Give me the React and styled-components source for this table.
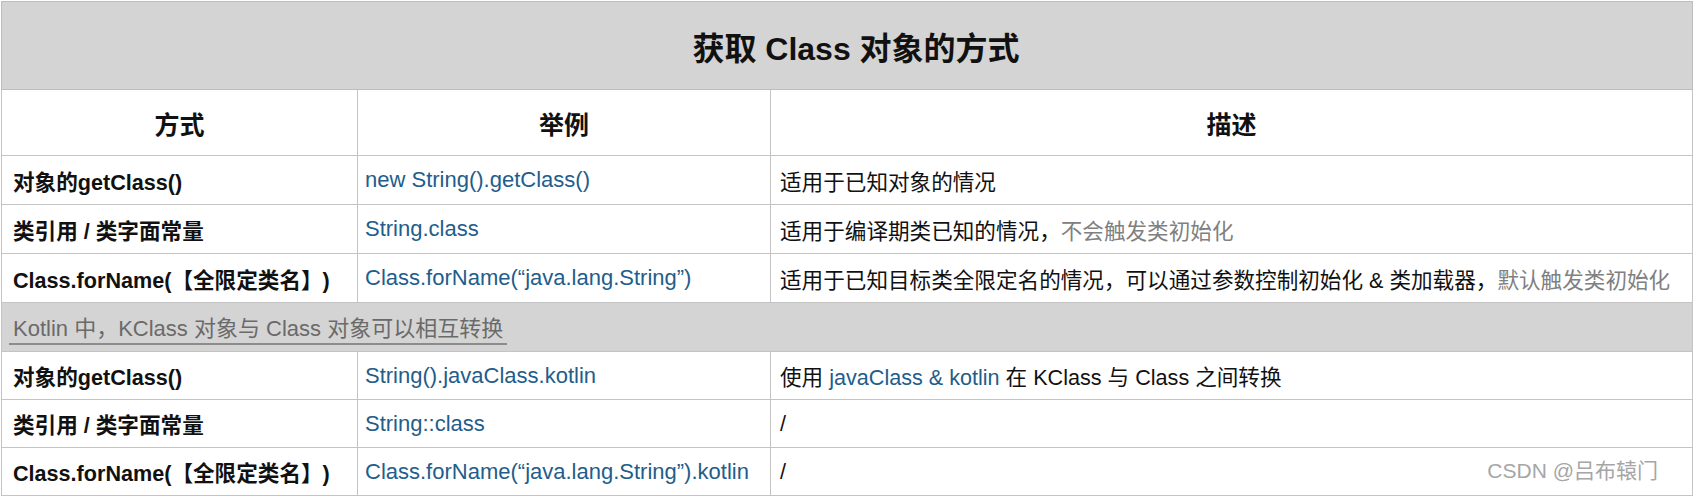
import styled, { createGlobalStyle } from 'styled-components';

const GlobalStyle = createGlobalStyle`
  html, body {
    margin: 0;
    background: #ffffff;
  }
  body {
    font-family: "Liberation Sans", "Noto Sans CJK SC", sans-serif;
    text-spacing-trim: space-all;
  }
`;

const Page = styled.div`
  position: relative;
  width: 1698px;
  height: 500px;
  padding: 1px 0 0 1px;
  box-sizing: border-box;
  overflow: hidden;
`;

const Table = styled.table`
  width: 1692px;
  border-collapse: collapse;
  table-layout: fixed;
  color: #111111;
`;

const TitleCell = styled.th`
  height: 87px;
  padding: 0 0 0 18px;
  background: #d4d4d4;
  border: 1px solid #bdbdbd;
  font-size: 32px;
  font-weight: 700;
  text-align: center;
  vertical-align: middle;
`;

const HeadCell = styled.th`
  height: 65px;
  padding: 0;
  border: 1px solid #c4c4c4;
  font-size: 25px;
  font-weight: 700;
  text-align: center;
  vertical-align: middle;
`;

const Row = styled.tr`
  height: ${(p) => p.$h}px;
`;

const Cell = styled.td`
  padding: 0 8px 0 ${(p) => p.$pad}px;
  border: 1px solid #c4c4c4;
  font-size: ${(p) => (p.$code ? 22 : 21.6)}px;
  font-weight: ${(p) => (p.$bold ? 700 : 400)};
  color: ${(p) => (p.$code ? '#225d8b' : '#111111')};
  white-space: nowrap;
  vertical-align: middle;
`;

const NoteCell = styled.td`
  padding: 0 0 0 7px;
  background: #d4d4d4;
  border: 1px solid #c4c4c4;
  vertical-align: middle;
`;

const NoteText = styled.span`
  display: inline-block;
  padding: 0 4px 1px 4px;
  border-bottom: 2px solid #8c8c8c;
  font-size: 22px;
  color: #6a6a6a;
`;

const Code = styled.span`
  color: #225d8b;
`;

const Muted = styled.span`
  color: #808080;
`;

const Watermark = styled.div`
  position: absolute;
  right: 40px;
  bottom: 16px;
  font-size: 21px;
  color: #a6a6a6;
`;

const groups = [
  [
    { way: '对象的getClass()', example: 'new String().getClass()', desc: <>适用于已知对象的情况</> },
    { way: '类引用 / 类字面常量', example: 'String.class', desc: <>适用于编译期类已知的情况，<Muted>不会触发类初始化</Muted></> },
    {
      way: 'Class.forName(【全限定类名】)',
      example: 'Class.forName(“java.lang.String”)',
      desc: <>适用于已知目标类全限定名的情况，可以通过参数控制初始化 &amp; 类加载器，<Muted>默认触发类初始化</Muted></>,
    },
  ],
  [
    {
      way: '对象的getClass()',
      example: 'String().javaClass.kotlin',
      desc: <>使用 <Code>javaClass &amp; kotlin</Code> 在 KClass 与 Class 之间转换</>,
    },
    { way: '类引用 / 类字面常量', example: 'String::class', desc: <>/</> },
    { way: 'Class.forName(【全限定类名】)', example: 'Class.forName(“java.lang.String”).kotlin', desc: <>/</> },
  ],
];

const BodyRow = ({ row, h }) => (
  <Row $h={h}>
    <Cell $bold $pad={11}>{row.way}</Cell>
    <Cell $code $pad={7}>{row.example}</Cell>
    <Cell $pad={9}>{row.desc}</Cell>
  </Row>
);

const App = () => {
  return (
    <Page>
      <GlobalStyle />
      <Table>
        <colgroup>
          <col style={{ width: '356px' }} />
          <col style={{ width: '413px' }} />
          <col />
        </colgroup>
        <thead>
          <tr>
            <TitleCell colSpan={3}>获取 Class 对象的方式</TitleCell>
          </tr>
          <tr>
            <HeadCell>方式</HeadCell>
            <HeadCell>举例</HeadCell>
            <HeadCell>描述</HeadCell>
          </tr>
        </thead>
        <tbody>
          {groups[0].map((r, i) => (
            <BodyRow row={r} h={49} key={'a' + i} />
          ))}
          <Row $h={49}>
            <NoteCell colSpan={3}>
              <NoteText>Kotlin 中，KClass 对象与 Class 对象可以相互转换</NoteText>
            </NoteCell>
          </Row>
          {groups[1].map((r, i) => (
            <BodyRow row={r} h={48} key={'b' + i} />
          ))}
        </tbody>
      </Table>
      <Watermark>CSDN @吕布辕门</Watermark>
    </Page>
  );
};

export default App;
